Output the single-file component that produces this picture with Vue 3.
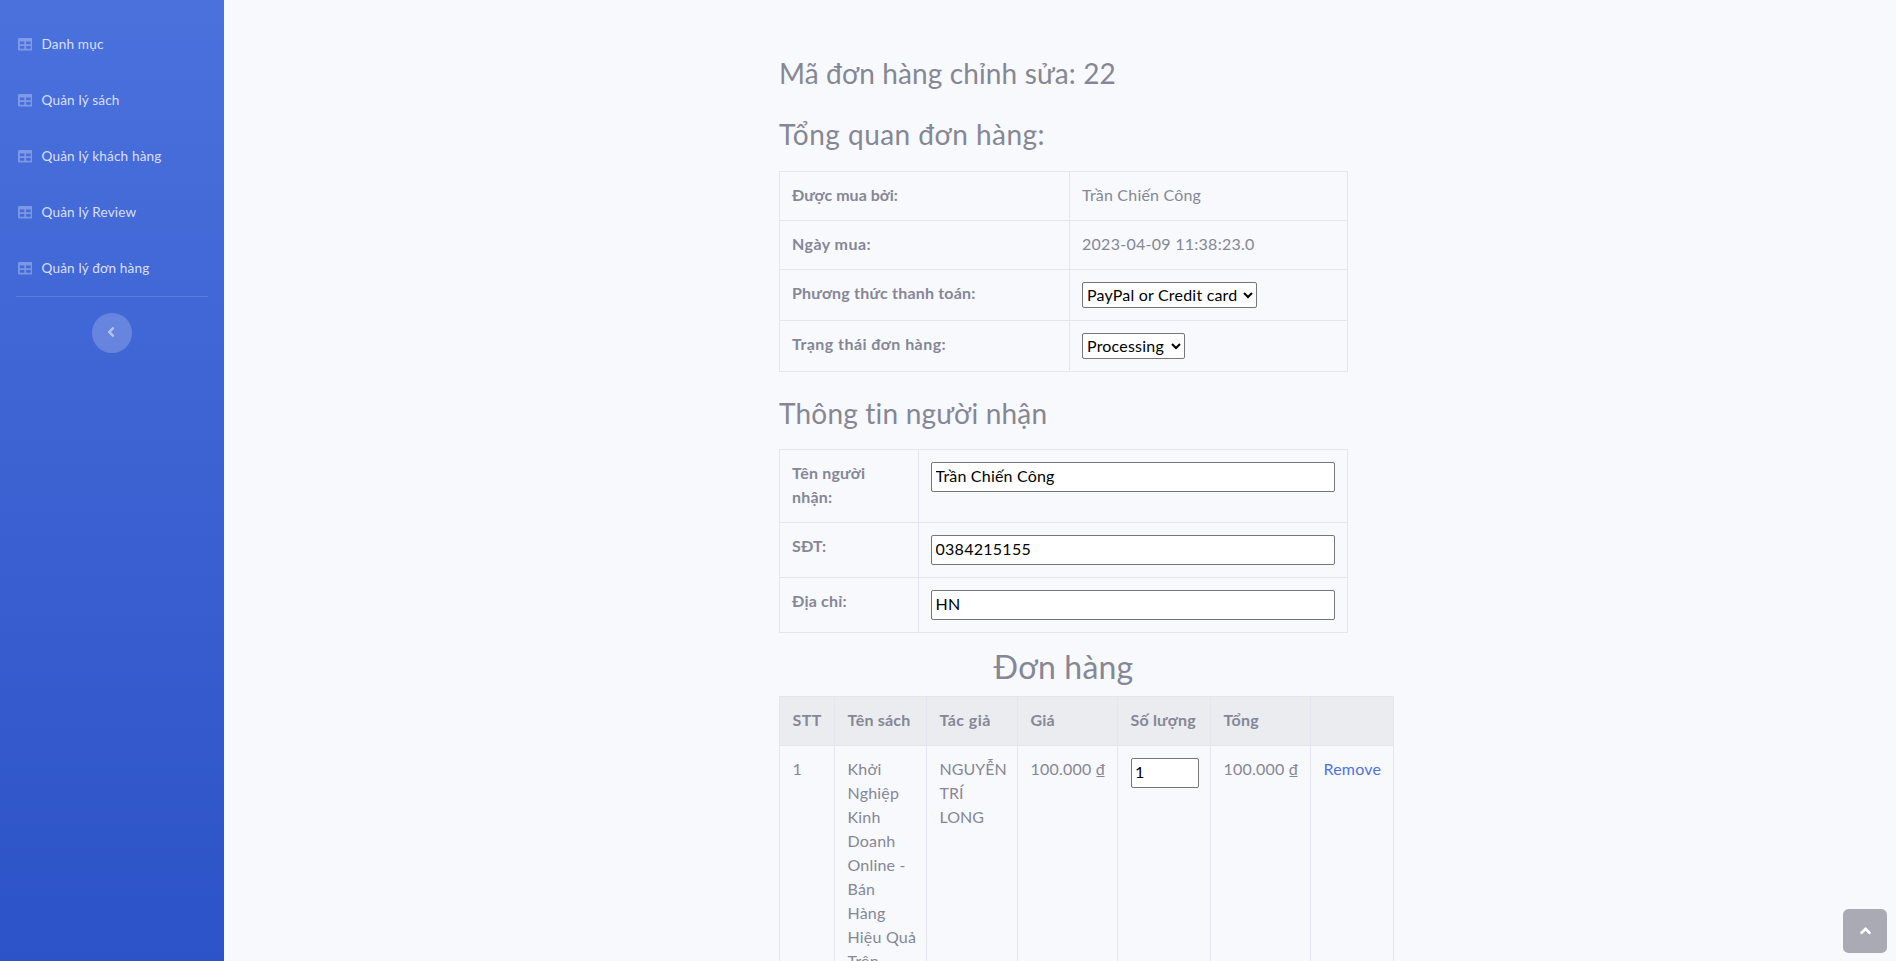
<script setup>
import { ref } from 'vue'

const menu = ['Danh mục', 'Quản lý sách', 'Quản lý khách hàng', 'Quản lý Review', 'Quản lý đơn hàng']
const payment = ref('PayPal or Credit card')
const status = ref('Processing')
const receiver = ref('Trần Chiến Công')
const phone = ref('0384215155')
const address = ref('HN')
const quantity = ref(1)
</script>

<template>
  <div class="wrapper">
    <nav class="sidebar">
      <a v-for="item in menu" :key="item" class="nav-link">
        <svg class="nav-icon" viewBox="0 0 512 512"><path d="M464 32H48C21.49 32 0 53.49 0 80v352c0 26.51 21.49 48 48 48h416c26.51 0 48-21.49 48-48V80c0-26.51-21.49-48-48-48zM224 416H64v-96h160v96zm0-160H64v-96h160v96zm224 160H288v-96h160v96zm0-160H288v-96h160v96z" /></svg>
        <span>{{ item }}</span>
      </a>
      <hr class="divider" />
      <button class="toggle" aria-label="Toggle">
        <svg viewBox="0 0 256 512"><path d="M31.7 239l136-136c9.4-9.4 24.6-9.4 33.9 0l22.6 22.6c9.4 9.4 9.4 24.6 0 33.9L127.9 256l96.4 96.4c9.4 9.4 9.4 24.6 0 33.9L201.7 409c-9.4 9.4-24.6 9.4-33.9 0l-136-136c-9.5-9.4-9.5-24.6-.1-34z" /></svg>
      </button>
    </nav>

    <main class="content">
      <h3 class="title-id">Mã đơn hàng chỉnh sửa: 22</h3>
      <h3 class="title-overview">Tổng quan đơn hàng:</h3>
      <table class="overview">
        <colgroup><col class="w-290" /><col /></colgroup>
        <tbody>
          <tr><th class="tight">Được mua bởi:</th><td>Trần Chiến Công</td></tr>
          <tr><th class="loose">Ngày mua:</th><td class="digits">2023-04-09 11:38:23.0</td></tr>
          <tr>
            <th>Phương thức thanh toán:</th>
            <td><select v-model="payment" class="payment"><option>PayPal or Credit card</option></select></td>
          </tr>
          <tr>
            <th class="loose">Trạng thái đơn hàng:</th>
            <td><select v-model="status" class="status"><option>Processing</option></select></td>
          </tr>
        </tbody>
      </table>

      <h3 class="title-receiver">Thông tin người nhận</h3>
      <table class="receiver">
        <colgroup><col class="w-139" /><col /></colgroup>
        <tbody>
          <tr><th>Tên người nhận:</th><td><input v-model="receiver" type="text" /></td></tr>
          <tr><th>SĐT:</th><td><input v-model="phone" class="digits" type="text" /></td></tr>
          <tr><th>Địa chỉ:</th><td><input v-model="address" type="text" /></td></tr>
        </tbody>
      </table>

      <h2>Đơn hàng</h2>
      <table class="order">
        <colgroup>
          <col class="w-55" /><col class="w-92" /><col class="w-91" /><col class="w-100" /><col class="w-93" /><col class="w-100" /><col class="w-83" />
        </colgroup>
        <thead>
          <tr><th class="loose">STT</th><th>Tên sách</th><th class="loose">Tác giả</th><th>Giá</th><th>Số lượng</th><th>Tổng</th><th></th></tr>
        </thead>
        <tbody>
          <tr>
            <td>1</td>
            <td>Khởi<br />Nghiệp<br />Kinh<br />Doanh<br />Online -<br />Bán<br />Hàng<br />Hiệu Quả<br />Trên</td>
            <td class="author">NGUYỄN<br />TRÍ<br />LONG</td>
            <td class="price">100.000 ₫</td>
            <td><input v-model="quantity" type="text" /></td>
            <td class="price">100.000 ₫</td>
            <td><a class="remove">Remove</a></td>
          </tr>
        </tbody>
      </table>
    </main>

    <a class="scroll-top" aria-label="Top">
      <svg viewBox="0 0 320 512"><path d="M177 159.7l136 136c9.4 9.4 9.4 24.6 0 33.9l-22.6 22.6c-9.4 9.4-24.6 9.4-33.9 0L160 255.9l-96.4 96.4c-9.4 9.4-24.6 9.4-33.9 0L7 329.7c-9.4-9.4-9.4-24.6 0-33.9l136-136c9.4-9.5 24.6-9.5 34-.1z" /></svg>
    </a>
  </div>
</template>

<style>
html,
body {
  overflow: hidden;
  background: #f8f9fc;
}
</style>

<style scoped>
* {
  box-sizing: border-box;
}
.wrapper {
  display: flex;
  height: 961px;
  overflow: hidden;
  background: #f8f9fc;
  color: #858796;
  font: 400 16px/24px Lato, "Noto Sans", sans-serif;
  letter-spacing: 0.2px;
}
.sidebar {
  display: flex;
  flex-direction: column;
  flex: 0 0 224px;
  height: 961px;
  padding-top: 16px;
  background: linear-gradient(180deg, #4b71dd 0%, #2c53c7 100%);
}
.nav-link {
  display: flex;
  align-items: center;
  height: 56px;
  padding-left: 17.5px;
  gap: 9.5px;
  color: rgba(255, 255, 255, 0.8);
  font-size: 13.6px;
  letter-spacing: 0.15px;
}
.nav-icon {
  width: 14.5px;
  height: 14.5px;
  fill: rgba(255, 255, 255, 0.3);
}
.divider {
  width: 192px;
  height: 1px;
  margin: 0 16px 16px;
  border: 0;
  background: rgba(255, 255, 255, 0.15);
}
.toggle {
  display: flex;
  align-items: center;
  justify-content: center;
  align-self: center;
  width: 40px;
  height: 40px;
  padding: 0;
  border: 0;
  border-radius: 50%;
  background: rgba(255, 255, 255, 0.2);
}
.toggle svg {
  width: 8px;
  height: 16px;
  margin: 0 2px 2px 0;
  fill: rgba(255, 255, 255, 0.5);
}
.content {
  width: 569px;
  margin-left: 555px;
  padding-top: 56px;
}
h2,
h3 {
  margin: 0;
  font-weight: 400;
}
h3 {
  height: 34px;
  font-size: 28px;
  line-height: 34px;
  white-space: nowrap;
}
.title-id {
  letter-spacing: 0.13px;
}
.title-overview {
  margin: 27px 0 20px;
  letter-spacing: 0.48px;
}
.title-receiver {
  margin: 24px 0 19px;
}
h2 {
  height: 38px;
  margin: 15px 0 10px;
  font-size: 32px;
  line-height: 38px;
  text-align: center;
}
table {
  width: 569px;
  table-layout: fixed;
  border-collapse: collapse;
}
th,
td {
  padding: 11px 12px 13px;
  border: 1px solid #e3e6f0;
  text-align: left;
  vertical-align: top;
}
th {
  font-weight: 700;
}
.tight {
  letter-spacing: 0;
}
.loose {
  letter-spacing: 0.45px;
}
.digits {
  letter-spacing: 0.27px;
}
.author {
  letter-spacing: 0;
}
.order {
  width: 615px;
  white-space: nowrap;
}
.order th,
.order td {
  padding-left: 12.5px;
  padding-right: 11.5px;
}
.order thead th {
  background: #eaecf0;
}
.w-290 { width: 290px; }
.w-139 { width: 139px; }
.w-55 { width: 55px; }
.w-92 { width: 92px; }
.w-91 { width: 91px; }
.w-100 { width: 100px; }
.w-93 { width: 93px; }
.w-83 { width: 83px; }
select,
input {
  display: block;
  margin: 1px 0 -1px;
  border: 1px solid #767676;
  border-radius: 2px;
  background: #fff;
  color: #000;
  font: inherit;
  letter-spacing: inherit;
}
select {
  height: 26px;
  padding: 0 0 2px;
}
.payment { width: 175px; }
.status { width: 103px; }
input {
  width: 100%;
  height: 30px;
  padding: 0 4px 3px 3.5px;
}
.remove {
  color: #4e73df;
}
.scroll-top {
  position: absolute;
  top: 909px;
  left: 1843px;
  display: flex;
  align-items: center;
  justify-content: center;
  width: 44px;
  height: 44px;
  border-radius: 5.6px;
  background: rgba(90, 92, 105, 0.5);
}
.scroll-top svg {
  width: 11px;
  height: 17.6px;
  fill: #fff;
}
</style>
